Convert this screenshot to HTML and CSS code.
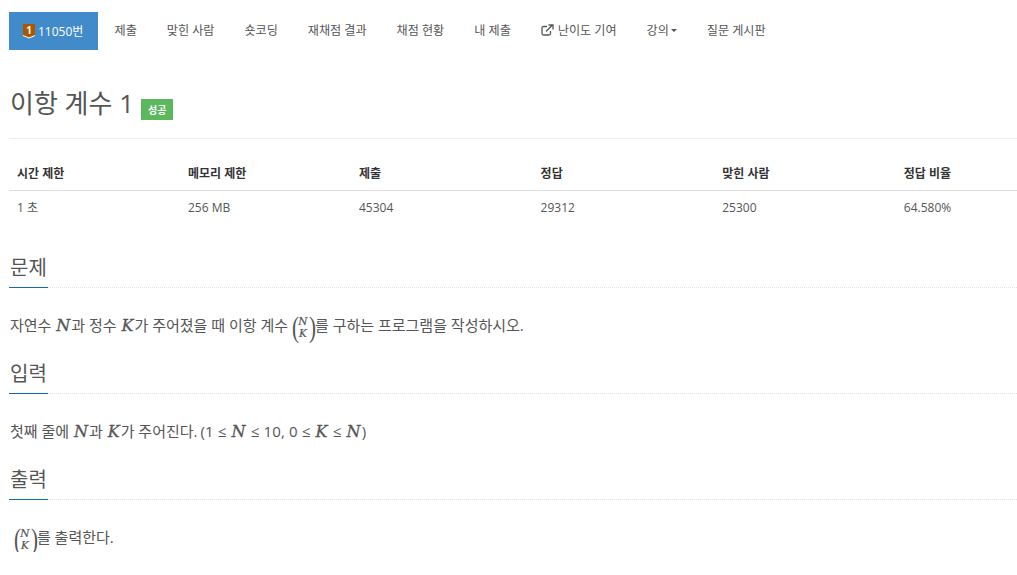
FILE: index.html
```html
<!DOCTYPE html>
<html lang="ko">
<head>
    <meta charset="UTF-8">
    <meta name="viewport" content="width=device-width, initial-scale=1.0">
    <title>이항 계수 1</title>
    <link rel="stylesheet" href="styles.css">
</head>
<body>
    <ul class="menu">
        <li class="active">
            <a href="#">
                <svg class="tier" width="12" height="15" viewBox="0 0 12 15">
                    <path d="M0 0H12V11.500L6 14L0 11.500Z" fill="#ad5600"/>
                    <path d="M0 11.500L6 14L12 11.500" fill="none" stroke="#fff" stroke-width="1"/>
                    <text x="6" y="10" text-anchor="middle" class="tier-num">1</text>
                </svg>
                11050번
            </a>
        </li>
        <li><a href="#">제출</a></li>
        <li><a href="#">맞힌 사람</a></li>
        <li><a href="#">숏코딩</a></li>
        <li><a href="#">재채점 결과</a></li>
        <li><a href="#">채점 현황</a></li>
        <li><a href="#">내 제출</a></li>
        <li>
            <a href="#">
                <svg class="ext" width="13" height="12" viewBox="0 0 13 12">
                    <path d="M6 2.500H2.500Q1 2.500 1 4V9.500Q1 11 2.500 11H8Q9.500 11 9.500 9.500V7" fill="none" stroke="#555" stroke-width="1.300"/>
                    <path d="M5 7.500L11 1.500M7.500 1H12V5.500" fill="none" stroke="#555" stroke-width="1.300"/>
                </svg>
                난이도 기여
            </a>
        </li>
        <li><a href="#">강의<span class="caret"></span></a></li>
        <li><a href="#">질문 게시판</a></li>
    </ul>

    <div class="page-header">
        <h1>이항 계수 1</h1>
        <span class="label">성공</span>
    </div>

    <table class="info">
        <thead>
            <tr>
                <th class="c1">시간 제한</th>
                <th class="c1">메모리 제한</th>
                <th class="c2">제출</th>
                <th class="c2">정답</th>
                <th class="c2">맞힌 사람</th>
                <th>정답 비율</th>
            </tr>
        </thead>
        <tbody>
            <tr>
                <td>1 초</td>
                <td>256 MB</td>
                <td>45304</td>
                <td>29312</td>
                <td>25300</td>
                <td>64.580%</td>
            </tr>
        </tbody>
    </table>

    <section class="problem">
        <div class="headline"><h2>문제</h2></div>
        <p>자연수 <i class="m">N</i>과 정수 <i class="m">K</i>가 주어졌을 때 이항 계수 <span class="binom"><span class="paren">(</span><span class="frac"><i>N</i><i>K</i></span><span class="paren">)</span></span>를 구하는 프로그램을 작성하시오.</p>
    </section>

    <section class="problem">
        <div class="headline"><h2>입력</h2></div>
        <p>첫째 줄에 <i class="m">N</i>과 <i class="m">K</i>가 주어진다. <span class="range">(1 ≤ <i class="m">N</i> ≤ 10, 0 ≤ <i class="m">K</i> ≤ <i class="m">N</i>)</span></p>
    </section>

    <section class="problem">
        <div class="headline"><h2>출력</h2></div>
        <p>&nbsp;<span class="binom"><span class="paren">(</span><span class="frac"><i>N</i><i>K</i></span><span class="paren">)</span></span>를 출력한다.</p>
    </section>
</body>
</html>
```

FILE: styles.css
```css
body {
    font-family: "Open Sans", "Noto Sans CJK KR", sans-serif;
    font-size: 13px;
    color: #555;
    background: #fff;
    margin: 0;
    padding: 12px 0 0 9px;
    overflow: hidden;
}
a {
    color: #555;
    text-decoration: none;
}
.menu {
    display: flex;
    list-style: none;
    margin: 0;
    padding: 0;
    height: 38px;
}
.menu a {
    display: flex;
    align-items: center;
    height: 36px;
    padding: 0 15px 2px;
    font-size: 12.1px;
    white-space: nowrap;
}
.menu .active {
    width: 89px;
    margin-right: 1.500px;
}
.menu .active a {
    background: #428bca;
    color: #fff;
    height: 38px;
    padding: 0 14px;
    font-size: 12px;
}
.tier {
    margin-right: 3px;
}
.tier-num {
    font-family: "Open Sans", sans-serif;
    font-size: 10px;
    font-weight: 700;
    fill: #fff;
}
.ext {
    margin-right: 4px;
}
.caret {
    display: inline-block;
    width: 0;
    height: 0;
    margin-left: 2px;
    border-top: 3px solid #555;
    border-left: 3px solid transparent;
    border-right: 3px solid transparent;
}
.page-header {
    display: flex;
    align-items: flex-end;
    height: 64px;
    margin: 24px 0 16px;
    border-bottom: 1px solid #eee;
}
.page-header h1 {
    margin: 0 7px 16px 1px;
    font-size: 26px;
    font-weight: 400;
    line-height: 37px;
}
.label {
    margin-bottom: 18px;
    padding: 2px 7px 0;
    background: #5cb85c;
    color: #fff;
    font-size: 10px;
    font-weight: 700;
    line-height: 19px;
}
.info {
    width: 1008px;
    table-layout: fixed;
    border-collapse: collapse;
    font-size: 12px;
}
.info th, .info td {
    padding: 0 8px;
    text-align: left;
}
.info th {
    height: 35px;
    color: #333;
    font-weight: 700;
    border-bottom: 1px solid #ddd;
}
.info td {
    height: 32px;
    padding-bottom: 2px;
}
.info .c1 {
    width: 155px;
}
.info .c2 {
    width: 165.600px;
}
.headline {
    height: 44px;
    margin-top: 9px;
    border-bottom: 1px dotted #e2e2e2;
}
.problem:first-of-type .headline {
    margin-top: 18px;
}
.headline h2 {
    display: inline-block;
    height: 44px;
    margin: 0;
    padding: 0 1px;
    border-bottom: 1px solid #0d6ba8;
    font-size: 20px;
    font-weight: 400;
    line-height: 50px;
}
.problem p {
    height: 30px;
    margin: 22px 0 0 1px;
    font-size: 15px;
    line-height: 30px;
    white-space: nowrap;
}
.range {
    margin-left: -1px;
    letter-spacing: 0.150px;
}
.m {
    font-family: "DejaVu Serif", serif;
    font-size: 16px;
    margin: 0 1px;
    -webkit-text-stroke: 0.3px #555;
}
.binom {
    display: inline-flex;
    align-items: center;
    height: 20px;
    margin-left: -1px;
    vertical-align: middle;
}
.paren {
    width: 6.500px;
    font-family: "Liberation Serif", serif;
    font-size: 30px;
    line-height: 30px;
    text-align: center;
    transform: scaleX(0.7);
}
.frac {
    display: flex;
    flex-direction: column;
    align-items: center;
    width: 11px;
    font-family: "DejaVu Serif", serif;
    font-size: 10.500px;
    line-height: 12px;
    -webkit-text-stroke: 0.2px #555;
}
```
